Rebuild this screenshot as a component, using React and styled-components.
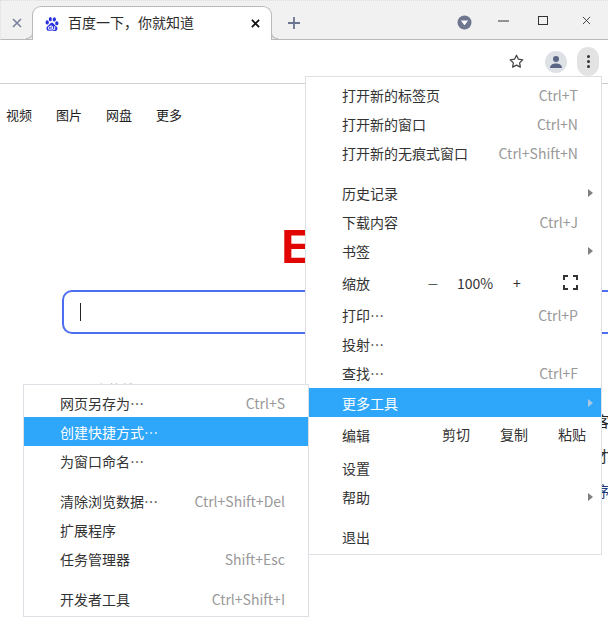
import styled, { createGlobalStyle } from "styled-components";
import { SiBaidu } from "react-icons/si";
import { FiStar } from "react-icons/fi";

const GlobalStyle = createGlobalStyle`
  html, body {
    margin: 0;
    padding: 0;
    background: white;
  }
  body {
    font-family: "Noto Sans CJK SC", "Noto Sans", sans-serif;
  }
`;

const Win = styled.div`
  position: relative;
  width: 608px;
  height: 626px;
  overflow: hidden;
  background: white;
  color: #333;
  font-size: 14px;
`;

const TabStrip = styled.div`
  display: flex;
  align-items: flex-end;
  height: 40px;
  box-sizing: border-box;
  padding-top: 6px;
  background: #f1f1f2;
  border-top: 1px dotted #ddd;
  border-left: 1px dotted #ddd;
  border-bottom: 1px solid #b9b9bb;
`;

const OldTab = styled.div`
  display: flex;
  align-items: center;
  justify-content: center;
  width: 31px;
  height: 33px;
  color: #7a8199;
`;

const ActiveTab = styled.div`
  position: relative;
  display: flex;
  align-items: center;
  width: 240px;
  height: 34px;
  box-sizing: border-box;
  margin-bottom: -1px;
  padding: 0 11px 0 12px;
  background: white;
  border: 1px solid #b9b9bb;
  border-bottom: none;
  border-radius: 9px 9px 0 0;

  &::before, &::after {
    content: "";
    position: absolute;
    bottom: 1px;
    width: 6px;
    height: 6px;
    border-bottom: 1px solid #b9b9bb;
  }
  &::before {
    left: -7px;
    border-right: 1px solid #b9b9bb;
    border-bottom-right-radius: 6px;
  }
  &::after {
    right: -7px;
    border-left: 1px solid #b9b9bb;
    border-bottom-left-radius: 6px;
  }
`;

const TabTitle = styled.span`
  flex: 1;
  margin: -3px 0 0 9px;
  color: #2b2b2b;
  line-height: 20px;
`;

const NewTab = styled.div`
  display: flex;
  align-items: center;
  justify-content: center;
  width: 44px;
  height: 33px;
  color: #6b7590;
`;

const WindowControls = styled.div`
  display: flex;
  align-items: center;
  height: 33px;
  margin-left: auto;
  color: #333;
`;

const ControlBox = styled.div`
  display: flex;
  align-items: center;
  justify-content: center;
  width: ${(p) => p.$w}px;
  height: 33px;
  box-sizing: border-box;
  padding-bottom: ${(p) => p.$lift || 0}px;
`;

const ToolBar = styled.div`
  display: flex;
  align-items: center;
  justify-content: flex-end;
  height: 44px;
  box-sizing: border-box;
  padding-right: 9px;
  border-bottom: 1px solid #cfcfcf;
`;

const StarBtn = styled.div`
  display: flex;
  margin-right: 21px;
  color: #444;
`;

const Avatar = styled.div`
  display: flex;
  align-items: center;
  justify-content: center;
  width: 22px;
  height: 22px;
  margin-right: 10px;
  border-radius: 50%;
  background: #dee1e6;
`;

const MenuBtn = styled.div`
  display: flex;
  flex-direction: column;
  align-items: center;
  justify-content: center;
  gap: 2px;
  width: 22px;
  height: 29px;
  border-radius: 11px;
  background: #e3e3e3;
`;

const Dot = styled.span`
  width: 3px;
  height: 3px;
  border-radius: 50%;
  background: #333;
`;

const Page = styled.div`
  display: flex;
  flex-direction: column;
  color: #222;
`;

const Nav = styled.div`
  display: flex;
  gap: 24px;
  height: 18px;
  padding: 22px 6px;
  font-size: 13px;
  line-height: 18px;
`;

const NavLink = styled.span`
  color: #222;
`;

const Logo = styled.div`
  height: 64px;
  margin-top: 68px;
  padding-left: 281px;
  color: #e10601;
  font-family: "Liberation Sans", sans-serif;
  font-size: 49px;
  font-weight: bold;
  line-height: 64px;
`;

const SearchBox = styled.div`
  display: flex;
  align-items: center;
  flex: none;
  width: 640px;
  height: 44px;
  box-sizing: border-box;
  margin: 12px 0 0 62px;
  padding-left: 16px;
  border: 2px solid #4e6ef2;
  border-radius: 10px;
`;

const Caret = styled.span`
  width: 1px;
  height: 18px;
  background: #222;
`;

const HintRow = styled.div`
  height: 18px;
  margin: 46px 0 0 80px;
  color: #bbb;
  font-size: 14px;
  line-height: 18px;
`;

const SideList = styled.div`
  display: flex;
  flex-direction: column;
  gap: 17px;
  margin: 14px 0 0 595px;
  font-size: 15px;
  line-height: 18px;
  white-space: nowrap;
`;

const SideItem = styled.span`
  color: ${(p) => p.$color || "#222"};
`;

const Menu = styled.div`
  position: absolute;
  left: ${(p) => p.$left}px;
  top: ${(p) => p.$top}px;
  width: ${(p) => p.$width}px;
  height: ${(p) => p.$height}px;
  box-sizing: border-box;
  padding-top: ${(p) => p.$pad}px;
  background: white;
  border: 1px solid #dcdfe3;
`;

const Row = styled.div`
  position: relative;
  display: flex;
  align-items: center;
  height: ${(p) => p.$h || 29}px;
  padding: 0 ${(p) => p.$right}px 0 ${(p) => p.$left}px;
  background: ${(p) => (p.$active ? "#2ea6f9" : "transparent")};
  color: ${(p) => (p.$active ? "white" : "#333")};
  line-height: 20px;
  white-space: nowrap;
`;

const Shortcut = styled.span`
  margin-left: auto;
  color: #999;
`;

const Arrow = styled.span`
  position: absolute;
  right: 8px;
  top: 50%;
  margin-top: -4px;
  border-left: 5px solid ${(p) => (p.$active ? "#a9c9e4" : "#808080")};
  border-top: 4px solid transparent;
  border-bottom: 4px solid transparent;
`;

const Gap = styled.div`
  height: 11px;
`;

const ZoomCtl = styled.span`
  display: flex;
  align-items: center;
  margin-left: auto;
`;

const ZoomPart = styled.span`
  display: flex;
  justify-content: ${(p) => p.$align || "center"};
  width: ${(p) => p.$w}px;
  font-size: ${(p) => p.$size || 14}px;
`;

const EditActions = styled.span`
  display: flex;
  gap: 30px;
  margin: -2px -8px 0 auto;
`;

const mainItems = [
  { label: "打开新的标签页", key: "Ctrl+T" },
  { label: "打开新的窗口", key: "Ctrl+N" },
  { label: "打开新的无痕式窗口", key: "Ctrl+Shift+N" },
  { gap: true },
  { label: "历史记录", arrow: true },
  { label: "下载内容", key: "Ctrl+J" },
  { label: "书签", arrow: true },
  { label: "缩放", zoom: true, h: 35 },
  { label: "打印…", key: "Ctrl+P" },
  { label: "投射…" },
  { label: "查找…", key: "Ctrl+F", h: 30 },
  { label: "更多工具", arrow: true, active: true },
  { label: "编辑", edit: true, h: 36 },
  { label: "设置" },
  { label: "帮助", arrow: true },
  { gap: true },
  { label: "退出" },
];

const subItems = [
  { label: "网页另存为…", key: "Ctrl+S" },
  { label: "创建快捷方式…", active: true },
  { label: "为窗口命名…" },
  { gap: true },
  { label: "清除浏览数据…", key: "Ctrl+Shift+Del" },
  { label: "扩展程序" },
  { label: "任务管理器", key: "Shift+Esc" },
  { gap: true },
  { label: "开发者工具", key: "Ctrl+Shift+I" },
];

const CloseIcon = ({ size = 10, width = 1.5, color = "currentColor" }) => (
  <svg width={size} height={size} viewBox="0 0 10 10">
    <path d="M1 1L9 9M9 1L1 9" stroke={color} strokeWidth={width} fill="none" />
  </svg>
);

const FullscreenIcon = () => (
  <svg width="15" height="15" viewBox="0 0 15 15">
    <path
      d="M1 5V1H5M10 1H14V5M14 10V14H10M5 14H1V10"
      stroke="#333"
      strokeWidth="2"
      fill="none"
    />
  </svg>
);

const MenuRows = ({ items, left, right }) =>
  items.map((item, i) => {
    if (item.gap) return <Gap key={i} />;
    return (
      <Row key={i} $left={left} $right={right} $h={item.h} $active={item.active}>
        {item.label}
        {item.key && <Shortcut>{item.key}</Shortcut>}
        {item.arrow && <Arrow $active={item.active} />}
        {item.zoom && (
          <ZoomCtl>
            <ZoomPart $w={20} $size={11}>—</ZoomPart>
            <ZoomPart $w={64}>100%</ZoomPart>
            <ZoomPart $w={20}>+</ZoomPart>
            <ZoomPart $w={51} $align="flex-end">
              <FullscreenIcon />
            </ZoomPart>
          </ZoomCtl>
        )}
        {item.edit && (
          <EditActions>
            <span>剪切</span>
            <span>复制</span>
            <span>粘贴</span>
          </EditActions>
        )}
      </Row>
    );
  });

export default function App() {
  return (
    <Win>
      <GlobalStyle />
      <TabStrip>
        <OldTab>
          <CloseIcon size={10} width={1.6} />
        </OldTab>
        <ActiveTab>
          <SiBaidu size={14} color="#2932e1" />
          <TabTitle>百度一下，你就知道</TabTitle>
          <CloseIcon size={9} width={2} color="#111" />
        </ActiveTab>
        <NewTab>
          <svg width="14" height="14" viewBox="0 0 14 14">
            <path d="M7 1V13M1 7H13" stroke="currentColor" strokeWidth="1.8" />
          </svg>
        </NewTab>
        <WindowControls>
          <ControlBox $w={40}>
            <svg width="15" height="15" viewBox="0 0 15 15">
              <circle cx="7.5" cy="7.5" r="7" fill="#6f7690" />
              <path d="M3.8 5.6H11.2L7.5 10.2Z" fill="white" />
            </svg>
          </ControlBox>
          <ControlBox $w={38} $lift={4}>
            <svg width="11" height="2" viewBox="0 0 11 2">
              <path d="M0 1H11" stroke="#333" strokeWidth="1" />
            </svg>
          </ControlBox>
          <ControlBox $w={42} $lift={4}>
            <svg width="10" height="9" viewBox="0 0 10 9">
              <rect x="0.5" y="0.5" width="9" height="8" fill="none" stroke="#333" strokeWidth="1" />
            </svg>
          </ControlBox>
          <ControlBox $w={44} $lift={4}>
            <CloseIcon size={9} width={1} />
          </ControlBox>
        </WindowControls>
      </TabStrip>
      <ToolBar>
        <StarBtn>
          <FiStar size={15} strokeWidth={2} />
        </StarBtn>
        <Avatar>
          <svg width="14" height="14" viewBox="0 0 14 14">
            <circle cx="7" cy="4" r="3" fill="#5a6685" />
            <path d="M1 13C1 9.6 4 8.4 7 8.4S13 9.6 13 13Z" fill="#5a6685" />
          </svg>
        </Avatar>
        <MenuBtn>
          <Dot />
          <Dot />
          <Dot />
        </MenuBtn>
      </ToolBar>
      <Page>
        <Nav>
          <NavLink>视频</NavLink>
          <NavLink>图片</NavLink>
          <NavLink>网盘</NavLink>
          <NavLink>更多</NavLink>
        </Nav>
        <Logo>E</Logo>
        <SearchBox>
          <Caret />
        </SearchBox>
        <HintRow>百度热搜</HintRow>
        <SideList>
          <SideItem>客</SideItem>
          <SideItem $color="#333">才</SideItem>
          <SideItem $color="#1f3a7a">序</SideItem>
        </SideList>
      </Page>
      <Menu $left={305} $top={76} $width={297} $height={479} $pad={3}>
        <MenuRows items={mainItems} left={36} right={23} />
      </Menu>
      <Menu $left={23} $top={384} $width={286} $height={233} $pad={3}>
        <MenuRows items={subItems} left={36} right={23} />
      </Menu>
    </Win>
  );
}
